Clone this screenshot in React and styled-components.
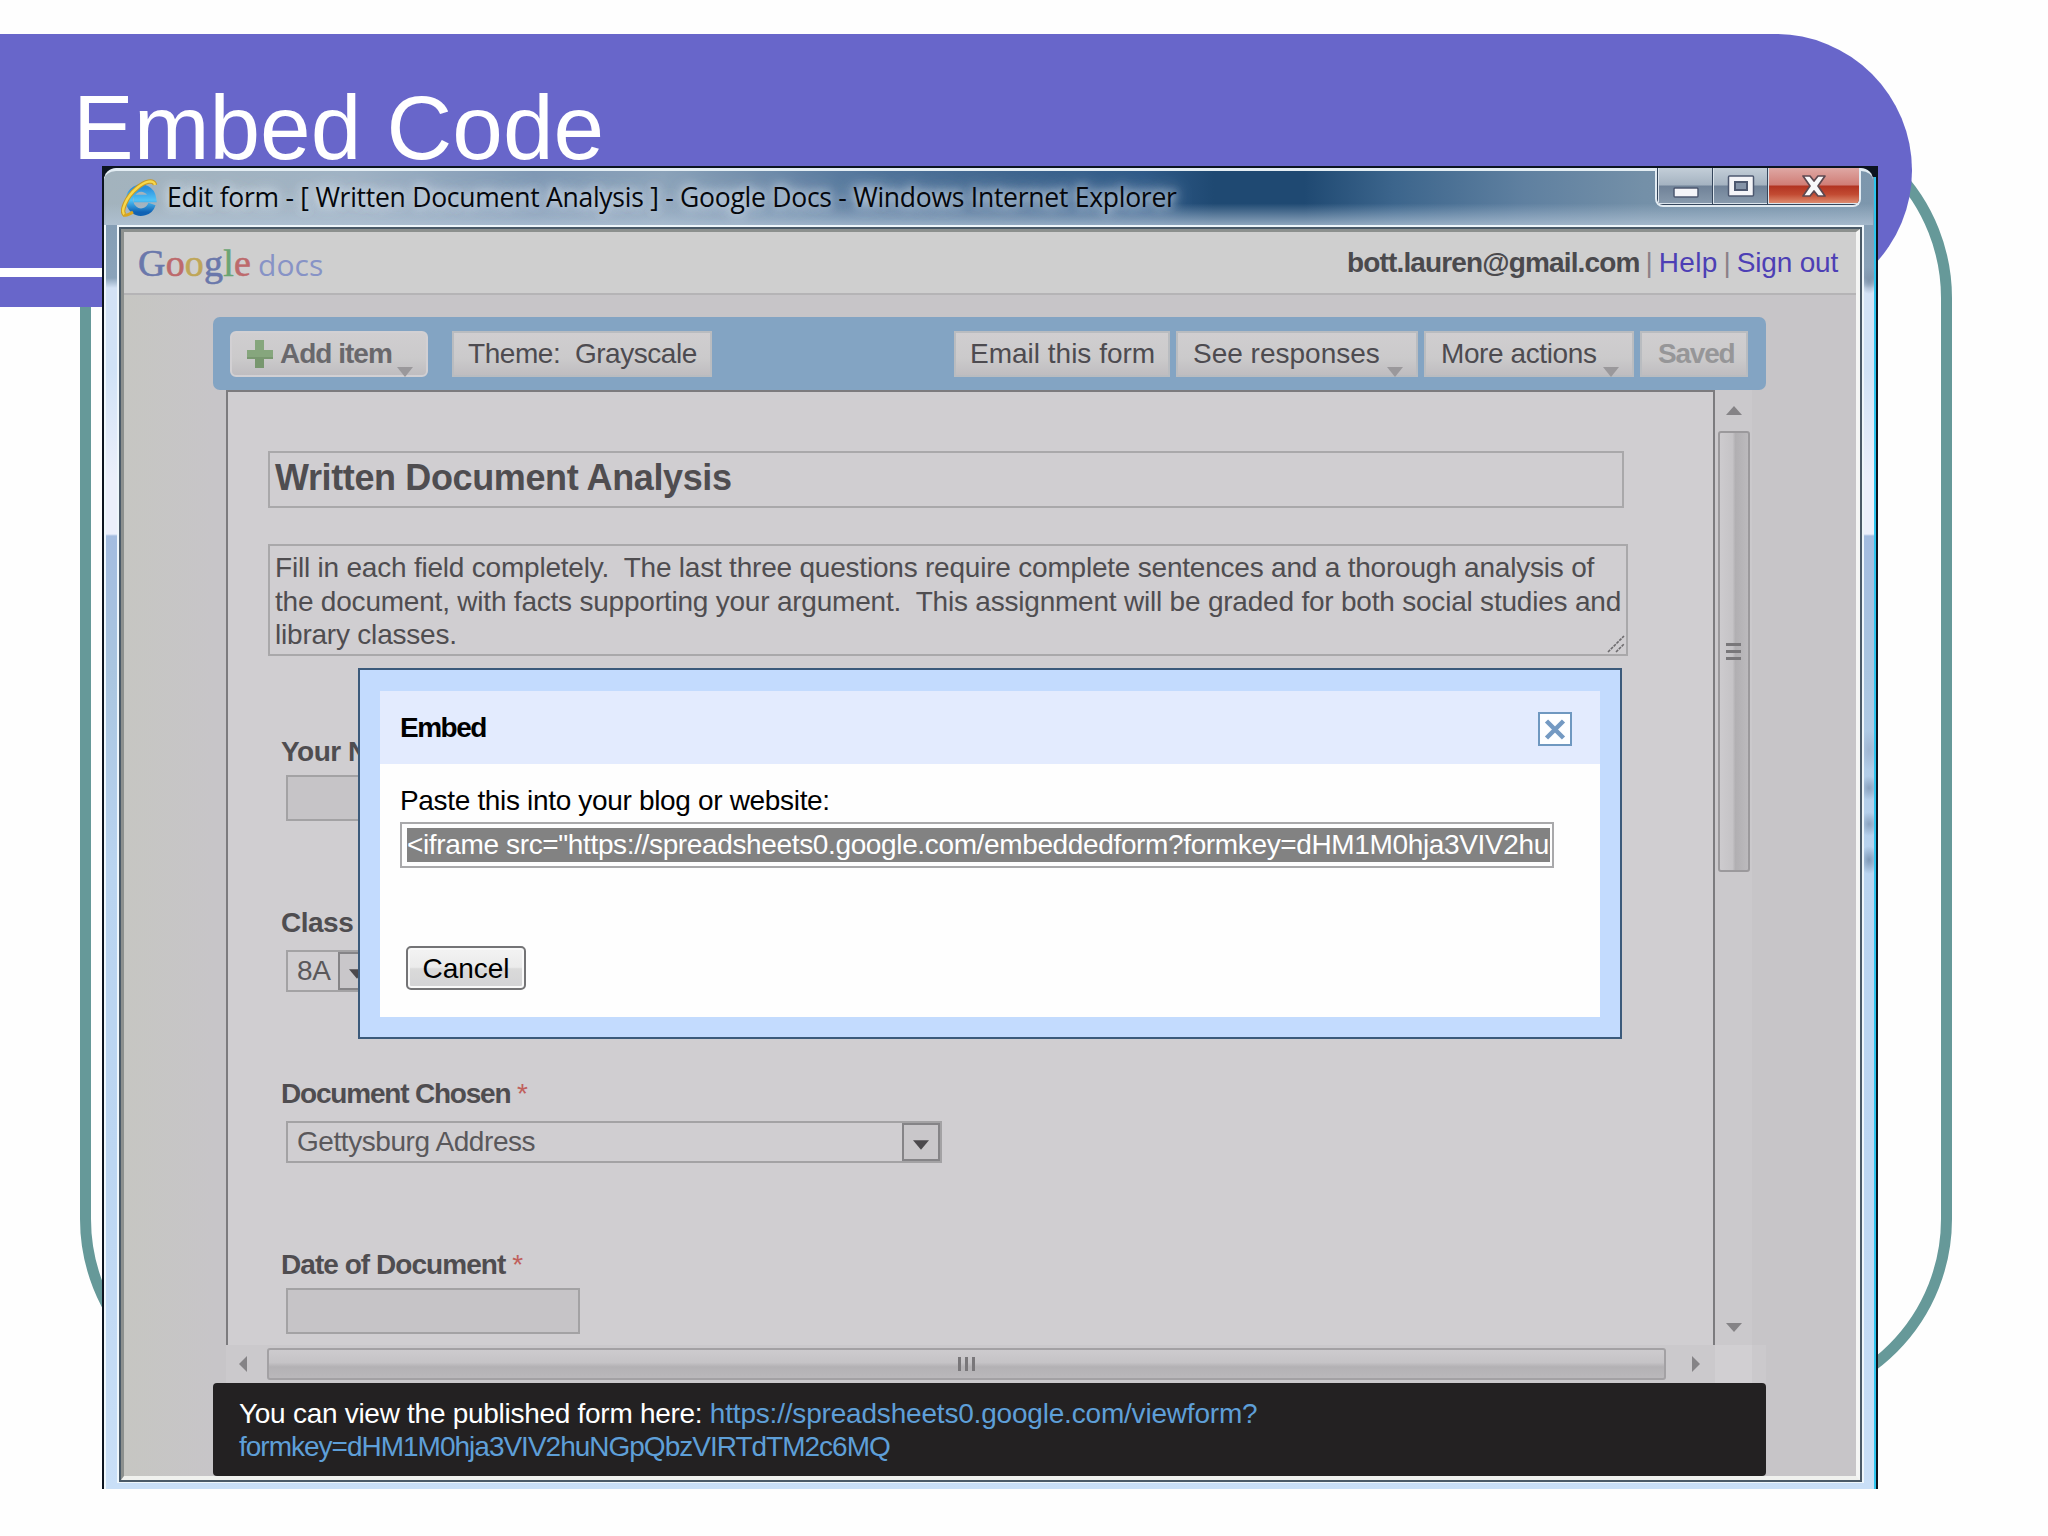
import React from 'react';
import styled, { createGlobalStyle } from 'styled-components';

const App = () => {
  return (
    <>
      <GlobalStyle />
      <Slide>
        <TealOutline />
        <Banner />
        <BannerRule />
        <SlideTitle>Embed Code</SlideTitle>

        <Window>
          <TitleBar>
            <BrowserIcon />
            <WindowTitle>Edit form - [ Written Document Analysis ] - Google Docs - Windows Internet Explorer</WindowTitle>
            <WindowButtons>
              <WindowButton $width={54}><MinimizeIcon /></WindowButton>
              <WindowButton $width={54}><MaximizeIcon /></WindowButton>
              <WindowButton $width={91} $close><CloseIcon /></WindowButton>
            </WindowButtons>
          </TitleBar>

          <Frame>
            <FrameEdge>
              <Client>
                <Header>
                  <Logo>
                    <LogoLetter $color="#6a78ab">G</LogoLetter>
                    <LogoLetter $color="#bd6a6c">o</LogoLetter>
                    <LogoLetter $color="#bfa658">o</LogoLetter>
                    <LogoLetter $color="#6a78ab">g</LogoLetter>
                    <LogoLetter $color="#6ba573">l</LogoLetter>
                    <LogoLetter $color="#bd6a6c">e</LogoLetter>
                    <LogoDocs>docs</LogoDocs>
                  </Logo>
                  <Account>
                    <Email>bott.lauren@gmail.com</Email>
                    <Divider>|</Divider>
                    <HeaderLink $spacing={0.3}>Help</HeaderLink>
                    <Divider>|</Divider>
                    <HeaderLink $spacing={-0.2}>Sign out</HeaderLink>
                  </Account>
                </Header>

                <Workspace>
                  <Toolbar>
                    <ToolButton $width={198} $pad={14} $spacing={-1} $bold $rounded>
                      <PlusIcon />
                      Add item
                      <DropArrow />
                    </ToolButton>
                    <ToolButton $width={260} $left={24} $pad={14} $spacing={-0.45}>Theme:&nbsp; Grayscale</ToolButton>
                    <ToolSpacer />
                    <ToolButton $width={216} $pad={14}>Email this form</ToolButton>
                    <ToolButton $width={242} $left={6}>See responses<DropArrow /></ToolButton>
                    <ToolButton $width={210} $left={6} $spacing={-0.4}>More actions<DropArrow /></ToolButton>
                    <ToolButton $width={108} $left={6} $pad={16} $spacing={-1.2} $bold $muted>Saved</ToolButton>
                  </Toolbar>

                  <PanelRow>
                    <FormPanel>
                      <FormTitle>Written Document Analysis</FormTitle>
                      <Description>
                        <Line>Fill in each field completely.&nbsp; The last three questions require complete sentences and a thorough analysis of</Line>
                        <Line>the document, with facts supporting your argument.&nbsp; This assignment will be graded for both social studies and</Line>
                        <Line>library classes.</Line>
                        <ResizeGrip />
                      </Description>
                      <Field>
                        <Label $spacing={-0.5}>Your Name</Label>
                        <TextInput />
                      </Field>
                      <Field>
                        <Label $spacing={-0.5}>Class</Label>
                        <Select $width={92}>8A<SelectArrow><ArrowDown /></SelectArrow></Select>
                      </Field>
                      <Field>
                        <Label $spacing={-1.2}>Document Chosen <Star>*</Star></Label>
                        <Select $width={656}>Gettysburg Address<SelectArrow><ArrowDown /></SelectArrow></Select>
                      </Field>
                      <Field>
                        <Label $spacing={-0.95}>Date of Document <Star>*</Star></Label>
                        <TextInput />
                      </Field>
                    </FormPanel>
                    <VerticalScroll>
                      <ScrollArrow direction="up" />
                      <VerticalThumb><i /><i /><i /></VerticalThumb>
                      <ScrollArrow direction="down" />
                    </VerticalScroll>
                  </PanelRow>

                  <HorizontalScroll>
                    <ScrollArrow direction="left" />
                    <HorizontalThumb><i /><i /><i /></HorizontalThumb>
                    <ScrollArrow direction="right" />
                    <ScrollCorner />
                  </HorizontalScroll>

                  <Notice>
                    <NoticeLine>You can view the published form here: <NoticeLink $spacing={-0.19}>https://spreadsheets0.google.com/viewform?</NoticeLink></NoticeLine>
                    <NoticeLine><NoticeLink $spacing={-1}>formkey=dHM1M0hja3VIV2huNGpQbzVIRTdTM2c6MQ</NoticeLink></NoticeLine>
                  </Notice>
                </Workspace>
              </Client>
            </FrameEdge>
          </Frame>

          <Dialog>
            <DialogHeader>
              <DialogTitle>Embed</DialogTitle>
              <DialogClose />
            </DialogHeader>
            <DialogBody>
              <Prompt>Paste this into your blog or website:</Prompt>
              <EmbedField>
                <Selection>&lt;iframe src="https://spreadsheets0.google.com/embeddedform?formkey=dHM1M0hja3VIV2hu</Selection>
              </EmbedField>
              <CancelButton>Cancel</CancelButton>
            </DialogBody>
          </Dialog>
        </Window>
      </Slide>
    </>
  );
};

/* Icons */
const BrowserIcon = () => (
  <BrowserSvg width="36" height="38" viewBox="0 0 36 38">
    <defs>
      <linearGradient id="ie" x1="0" y1="0" x2="0" y2="1">
        <stop offset="0" stopColor="#2a8fdd" />
        <stop offset="0.5" stopColor="#4fc3f7" />
        <stop offset="1" stopColor="#0f62b4" />
      </linearGradient>
    </defs>
    <path d="M31 25 A11.5 12 0 1 1 31.5 19.5 L13 19.5" fill="none" stroke="url(#ie)" strokeWidth="7.5" />
    <path d="M4 36 C-1 33 5 18 16 9 C24 2 33 0 34 6" fill="none" stroke="#c99a24" strokeWidth="4.5" />
    <path d="M4 36 C-1 33 5 18 16 9 C24 2 33 0 34 6" fill="none" stroke="#f7d84c" strokeWidth="2.4" />
    <path d="M3 36 C6 37 9 35 12 33" fill="none" stroke="#d9a520" strokeWidth="3" />
  </BrowserSvg>
);

const MinimizeIcon = () => (
  <MinimizeSvg width="26" height="14" viewBox="0 0 26 14">
    <rect x="1" y="2" width="24" height="9" rx="1" fill="#f4f4f8" stroke="#4d5870" strokeWidth="1.5" />
  </MinimizeSvg>
);

const MaximizeIcon = () => (
  <svg width="28" height="24" viewBox="0 0 28 24">
    <rect x="1.5" y="2" width="25" height="20" rx="1" fill="#f4f4f8" stroke="#4d5870" strokeWidth="1.5" />
    <rect x="8" y="8" width="12" height="8" fill="#8493a8" stroke="#4d5870" strokeWidth="2" />
  </svg>
);

const CloseIcon = () => (
  <svg width="28" height="24" viewBox="0 0 28 24">
    <path d="M3 2 H10 L14 7 L18 2 H25 L18 12 L25 22 H18 L14 17 L10 22 H3 L10 12 Z" fill="#f8f8fa" stroke="#5d4850" strokeWidth="1.7" strokeLinejoin="round" />
  </svg>
);

const PlusIcon = () => (
  <svg width="28" height="30" viewBox="0 0 28 30">
    <path d="M9 1 H18 V11 H27 V20 H18 V29 H9 V20 H1 V11 H9 Z" fill="#86a67d" />
    <path d="M1 18 H27 V20 H18 V29 H9 V20 H1 Z" fill="#78976f" />
  </svg>
);

const ArrowDown = () => (
  <svg width="16" height="10" viewBox="0 0 17 10">
    <path d="M0 0 H17 L8.5 10 Z" fill="#4b494c" />
  </svg>
);

const arrows = {
  up: 'M0 9 L8 0 L16 9 Z',
  down: 'M0 0 H16 L8 9 Z',
  left: 'M8 0 V16 L0 8 Z',
  right: 'M0 0 V16 L8 8 Z',
};

const ScrollArrow = ({ direction }) => {
  const flat = direction === 'up' || direction === 'down';
  return (
    <svg width={flat ? 16 : 10} height={flat ? 10 : 16}>
      <path d={arrows[direction]} fill="#858386" />
    </svg>
  );
};

const ResizeGrip = () => (
  <Grip width="18" height="18" viewBox="0 0 18 18">
    <path d="M1 17 L17 1 M9 17 L17 9" stroke="#6d6b6e" strokeWidth="1.6" strokeDasharray="3 1" fill="none" />
  </Grip>
);

const DialogClose = () => (
  <svg width="34" height="34" viewBox="0 0 34 34">
    <rect x="1" y="1" width="32" height="32" fill="#fdfeff" stroke="#6f98c0" strokeWidth="2" />
    <path d="M8.5 9 L25.5 26 M25.5 9 L8.5 26" stroke="#7399c2" strokeWidth="4.5" />
  </svg>
);

const GlobalStyle = createGlobalStyle`
  html, body {
    margin: 0;
    padding: 0;
    background: #fefefe;
    overflow: hidden;
  }
  * { box-sizing: border-box; }
  svg { display: block; flex: none; }
`;

/* Slide background */
const Slide = styled.div`
  position: relative;
  width: 2048px;
  height: 1536px;
  overflow: hidden;
  background: #fefefe;
  font-family: 'Liberation Sans', Arial, sans-serif;
  font-size: 28px;
  white-space: nowrap;
`;

const TealOutline = styled.div`
  position: absolute;
  left: 80px;
  top: 110px;
  width: 1872px;
  height: 1297px;
  border: 11px solid #669999;
  border-radius: 188px;
`;

const Banner = styled.div`
  position: absolute;
  left: 0;
  top: 34px;
  width: 1912px;
  height: 273px;
  background: #6866ca;
  border-radius: 0 137px 137px 0;
`;

const BannerRule = styled.div`
  position: absolute;
  left: 0;
  top: 268px;
  width: 1600px;
  height: 9px;
  background: #fff;
`;

const SlideTitle = styled.h1`
  position: absolute;
  left: 73px;
  top: 76px;
  margin: 0;
  color: #fff;
  font-size: 91px;
  font-weight: 400;
  line-height: 104px;
`;

/* Browser window */
const Window = styled.div`
  position: absolute;
  left: 102px;
  top: 166px;
  width: 1776px;
  height: 1323px;
  display: flex;
  flex-direction: column;
  border: 2px solid #0c1420;
  border-bottom: none;
  background:
    linear-gradient(#0c1420, #0c1420) 0 0 / 100% 9px no-repeat,
    linear-gradient(90deg, transparent 1770px, #2cc4ee 1770px),
    linear-gradient(90deg, #f0f8fc 2px, transparent 2px),
    radial-gradient(10px 14px at 1765px 112px, #8095ac, transparent),
    radial-gradient(10px 20px at 1765px 582px, #9fb6d2, transparent),
    radial-gradient(10px 12px at 1765px 620px, #8aa3c0, transparent),
    radial-gradient(10px 12px at 1765px 656px, #8aa3c0, transparent),
    radial-gradient(10px 14px at 1765px 692px, #7f9ab8, transparent),
    linear-gradient(180deg, #7d97ae 0, #8aa3ba 110px, #d3e2f5 120px, #d0e2f6 200px, #ebeffb 310px, #ebeffb 366px, #a3bce0 368px, #a9c5e0 500px, #b9d4f0 700px, #bcd6f2 1000px, #c9dff7 1320px);
`;

const TitleBar = styled.div`
  display: flex;
  height: 57px;
  padding-left: 17px;
  margin-right: 3px;
  border-top: 3px solid #e3edf3;
  border-radius: 12px 12px 0 0;
  background:
    linear-gradient(180deg, transparent 60%, rgba(178, 196, 214, 0.75) 100%),
    linear-gradient(90deg, #a3b3bd 0, #9fb2c4 250px, #7f98b4 430px, #8ba2b9 560px, #52759b 760px, #40668f 900px, #2f5a88 1040px, #1f4972 1110px, #1f4972 1200px, #3c658c 1290px, #5f80a0 1420px, #7490a8 1540px, #7d97ad 1771px);
`;

const BrowserSvg = styled.svg`
  margin-top: 8px;
`;

const MinimizeSvg = styled.svg`
  margin-top: 14px;
`;

const WindowTitle = styled.div`
  flex: 1;
  min-width: 0;
  margin-left: 10px;
  padding-top: 6px;
  color: #05070c;
  font-family: 'Open Sans', 'Noto Sans', sans-serif;
  font-size: 26.5px;
  line-height: 40px;
  letter-spacing: -0.26px;
  text-shadow: 0 0 8px rgba(222, 232, 242, 0.8), 0 0 14px rgba(222, 232, 242, 0.9), 0 0 20px rgba(222, 232, 242, 0.9);
`;

const WindowButtons = styled.div`
  display: flex;
  height: 39px;
  margin-top: -3px;
  margin-right: 12px;
  border: 2px solid #e2ebf2;
  border-top: none;
  border-radius: 0 0 8px 8px;
  overflow: hidden;
  background: #35465c;
`;

const WindowButton = styled.div`
  width: ${({ $width }) => $width}px;
  height: 36px;
  margin-left: 1px;
  display: flex;
  align-items: center;
  justify-content: center;
  border-left: 1px solid #dbe4ec;
  border-bottom: 1px solid #dbe4ec;
  background: ${({ $close }) => $close
    ? 'linear-gradient(180deg, #dfa8a4 0, #d07e77 48%, #b23422 52%, #c24a32 75%, #dd8a6e 100%)'
    : 'linear-gradient(180deg, #c3ced8 0, #a5b3c1 48%, #708298 52%, #8799ac 100%)'};
`;

const Frame = styled.div`
  flex: none;
  width: 1747px;
  height: 1258px;
  margin-left: 13px;
  border: 2px solid #eef6fb;
  border-bottom-width: 1px;
`;

const FrameEdge = styled.div`
  height: 100%;
  border: 2px solid #4a5a68;
`;

const Client = styled.div`
  height: 100%;
  display: flex;
  flex-direction: column;
  border-style: solid;
  border-width: 3px 4px 4px 3px;
  border-color: #8c908e #f4f5f4 #f0f1ee #8c908e;
  background: linear-gradient(90deg, #c6c6c2 0, #c7c5c8 90px);
`;

const Header = styled.div`
  flex: none;
  height: 63px;
  display: flex;
  justify-content: space-between;
  align-items: center;
  padding: 0 18px 0 14px;
  border-bottom: 2px solid #b5b4b6;
  background: #cfcfcf;
`;

const Logo = styled.div`
  display: flex;
  align-items: baseline;
  font-family: 'Liberation Serif', serif;
  font-size: 38px;
`;

const LogoLetter = styled.span`
  color: ${({ $color }) => $color};
  letter-spacing: 0.2px;
  -webkit-text-stroke: 0.6px ${({ $color }) => $color};
`;

const LogoDocs = styled.span`
  margin-left: 7px;
  color: #8793c6;
  font-family: 'Open Sans', sans-serif;
  font-size: 30px;
`;

const Account = styled.div`
  display: flex;
  gap: 6px;
  padding-top: 1px;
  color: #4b4a4d;
`;

const Email = styled.span`
  font-weight: 700;
  letter-spacing: -0.86px;
`;

const Divider = styled.span`
  color: #8b8188;
`;

const HeaderLink = styled.span`
  color: #4d3fb5;
  letter-spacing: ${({ $spacing }) => $spacing}px;
`;

const Workspace = styled.div`
  flex: 1;
  display: flex;
  flex-direction: column;
  width: 1642px;
  padding: 22px 0 0 89px;
`;

const Toolbar = styled.div`
  flex: none;
  height: 73px;
  display: flex;
  align-items: flex-start;
  padding: 14px 18px 0 17px;
  border-radius: 7px;
  background: #83a4c3;
`;

const ToolButton = styled.div`
  position: relative;
  flex: none;
  width: ${({ $width }) => $width}px;
  height: 46px;
  margin-left: ${({ $left }) => $left || 0}px;
  padding-left: ${({ $pad }) => $pad || 15}px;
  display: flex;
  align-items: center;
  gap: 6px;
  border: 2px solid ${({ $rounded }) => ($rounded ? '#d2d0d3' : '#b9bcc0')};
  border-radius: ${({ $rounded }) => ($rounded ? 6 : 0)}px;
  background: linear-gradient(180deg, #d0ced0 0, #cbcacb 60%, #bfbdc0 100%);
  color: ${({ $bold, $muted }) => ($muted ? '#969698' : $bold ? '#69686c' : '#4d4b50')};
  font-weight: ${({ $bold }) => ($bold ? 700 : 400)};
  letter-spacing: ${({ $spacing }) => $spacing || 0}px;
`;

const ToolSpacer = styled.div`
  flex: 1;
`;

const DropArrow = styled.span`
  position: absolute;
  right: 13px;
  bottom: -2px;
  border: 8px solid transparent;
  border-top: 10px solid #9a989b;
  border-bottom: none;
`;

const PanelRow = styled.div`
  flex: none;
  display: flex;
  height: 955px;
  margin-left: 13px;
`;

const FormPanel = styled.div`
  width: 1489px;
  padding: 59px 0 0 40px;
  border: 2px solid #7c7b7e;
  border-bottom: none;
  background: #d0ced1;
  color: #4f4d50;
  overflow: hidden;
`;

const FormTitle = styled.div`
  width: 1356px;
  height: 57px;
  padding-left: 5px;
  border: 2px solid #a9a8aa;
  font-size: 36px;
  font-weight: 700;
  line-height: 50px;
  letter-spacing: -0.38px;
`;

const Description = styled.div`
  position: relative;
  width: 1360px;
  height: 112px;
  margin-top: 36px;
  padding: 5px 0 0 5px;
  border: 2px solid #a9a8aa;
`;

const Line = styled.div`
  line-height: 33.5px;
  letter-spacing: -0.21px;
`;

const Grip = styled.svg`
  position: absolute;
  right: 1px;
  bottom: 1px;
`;

const Field = styled.div`
  height: 171px;
  padding-left: 18px;
  ${Description} + & { margin-top: 79px; }
`;

const Label = styled.div`
  height: 34px;
  margin-left: -5px;
  font-weight: 700;
  line-height: 33px;
  letter-spacing: ${({ $spacing }) => $spacing}px;
`;

const Star = styled.span`
  color: #c0605c;
  font-weight: 400;
`;

const TextInput = styled.div`
  width: 294px;
  height: 46px;
  margin-top: 6px;
  border: 2px solid #a3a2a4;
  background: #c6c4c7;
`;

const Select = styled.div`
  width: ${({ $width }) => $width}px;
  height: 42px;
  margin-top: 10px;
  padding-left: 9px;
  display: flex;
  align-items: center;
  justify-content: space-between;
  border: 2px solid #a3a2a4;
  color: #5a585b;
  letter-spacing: -0.43px;
`;

const SelectArrow = styled.div`
  width: 38px;
  height: 38px;
  padding-top: 6px;
  display: flex;
  align-items: center;
  justify-content: center;
  border: 2px solid #858487;
  background: #c9c7ca;
`;

/* Scroll bars */
const VerticalScroll = styled.div`
  width: 37px;
  display: flex;
  flex-direction: column;
  align-items: center;
  padding: 16px 0 12px;
  background: #cbc9cc;
  & > svg:last-child { margin-top: auto; }
`;

const VerticalThumb = styled.div`
  width: 32px;
  height: 441px;
  margin-top: 15px;
  display: flex;
  flex-direction: column;
  align-items: center;
  justify-content: center;
  gap: 4px;
  border: 2px solid #9b999c;
  border-radius: 3px;
  background: linear-gradient(90deg, #cdcbce 0, #c5c3c6 45%, #b1afb2 55%, #bcbabd 100%);
  i { width: 15px; height: 3px; background: #79777a; }
`;

const HorizontalScroll = styled.div`
  flex: none;
  display: flex;
  align-items: center;
  height: 38px;
  margin-left: 13px;
  padding-left: 13px;
  background: #cbc9cc;
`;

const HorizontalThumb = styled.div`
  width: 1399px;
  height: 32px;
  margin: 0 26px 0 18px;
  display: flex;
  align-items: center;
  justify-content: center;
  gap: 4px;
  border: 2px solid #a3a1a4;
  border-radius: 3px;
  background: linear-gradient(180deg, #cdcbce 0, #c5c3c6 45%, #b3b1b4 60%, #bab8bb 100%);
  i { width: 3px; height: 14px; background: #79777a; }
`;

const ScrollCorner = styled.div`
  width: 37px;
  height: 38px;
  margin-left: 13px;
  background: #d1cfd2;
`;

const Notice = styled.div`
  flex: 1;
  padding: 14px 0 0 26px;
  border-radius: 4px;
  background: #232122;
  color: #fff;
`;

const NoticeLine = styled.div`
  line-height: 33px;
  letter-spacing: -0.28px;
`;

const NoticeLink = styled.span`
  color: #5e9fd8;
  letter-spacing: ${({ $spacing }) => $spacing}px;
`;

/* Embed dialog */
const Dialog = styled.div`
  position: absolute;
  left: 254px;
  top: 500px;
  width: 1264px;
  height: 371px;
  display: flex;
  flex-direction: column;
  padding: 21px 20px 20px;
  border: 2px solid #3b5a7b;
  background: #c3dbfe;
`;

const DialogHeader = styled.div`
  height: 73px;
  display: flex;
  align-items: center;
  justify-content: space-between;
  padding: 2px 28px 0 20px;
  background: #e3ebfe;
`;

const DialogTitle = styled.div`
  padding-bottom: 3px;
  font-weight: 700;
  line-height: 33px;
  letter-spacing: -1.5px;
`;

const DialogBody = styled.div`
  flex: 1;
  display: flex;
  flex-direction: column;
  align-items: flex-start;
  padding: 20px 0 0 20px;
  background: #fefefe;
`;

const Prompt = styled.div`
  line-height: 33px;
  letter-spacing: -0.33px;
`;

const EmbedField = styled.div`
  width: 1154px;
  height: 46px;
  margin-top: 5px;
  padding: 4px 2px 4px 5px;
  border: 2px solid #a9a9ab;
`;

const Selection = styled.div`
  height: 34px;
  overflow: hidden;
  background: #828282;
  color: #fff;
  line-height: 34px;
  letter-spacing: -0.36px;
`;

const CancelButton = styled.div`
  width: 120px;
  height: 44px;
  margin: 78px 0 0 6px;
  border: 2px solid #747476;
  border-radius: 5px;
  background: linear-gradient(180deg, #f3f3f3 0, #ebebeb 48%, #dadada 52%, #d3d3d5 100%);
  box-shadow: inset 0 0 0 2px #f9f9f9;
  line-height: 41px;
  text-align: center;
`;

export default App;
